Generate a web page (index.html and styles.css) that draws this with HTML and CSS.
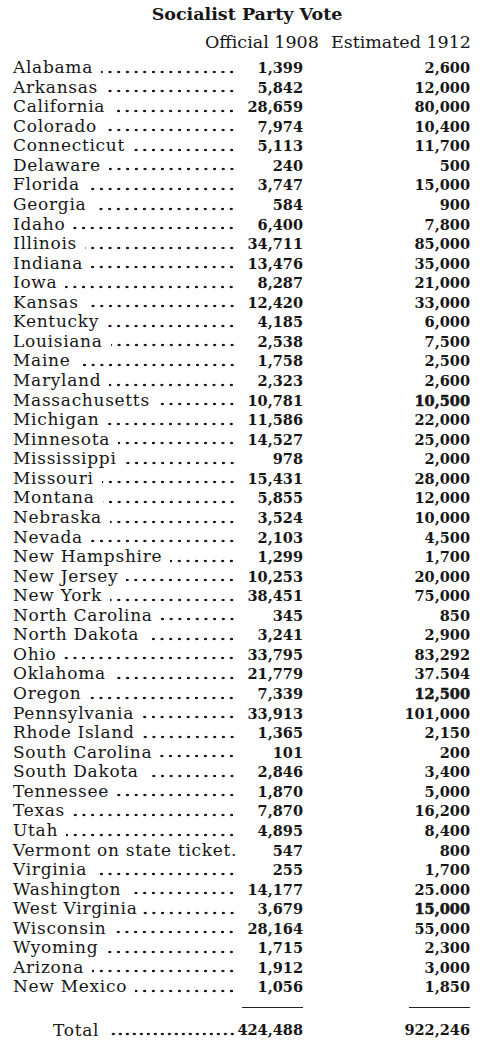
FILE: index.html
```html
<!doctype html>

<html lang="en">
<head>
    <meta charset="utf-8">
    <title>Socialist Party Vote</title>
    <link rel="stylesheet" href="styles.css">
</head>

<body>
<div class="sheet">
    <h1 class="title">Socialist Party Vote</h1>
    <div class="heads">
        <span>Official 1908</span>
        <span>Estimated 1912</span>
    </div>
    <table class="votes">
        <colgroup>
            <col class="col-state">
            <col class="col-1908">
            <col class="col-1912">
        </colgroup>
        <tbody>
            <tr><td><div class="label"><span>Alabama</span><span class="dots"></span></div></td><td class="num">1,399</td><td class="num">2,600</td></tr>
            <tr><td><div class="label"><span>Arkansas</span><span class="dots"></span></div></td><td class="num">5,842</td><td class="num">12,000</td></tr>
            <tr><td><div class="label"><span>California</span><span class="dots"></span></div></td><td class="num">28,659</td><td class="num">80,000</td></tr>
            <tr><td><div class="label"><span>Colorado</span><span class="dots"></span></div></td><td class="num">7,974</td><td class="num">10,400</td></tr>
            <tr><td><div class="label"><span>Connecticut</span><span class="dots"></span></div></td><td class="num">5,113</td><td class="num">11,700</td></tr>
            <tr><td><div class="label"><span>Delaware</span><span class="dots"></span></div></td><td class="num">240</td><td class="num">500</td></tr>
            <tr><td><div class="label"><span>Florida</span><span class="dots"></span></div></td><td class="num">3,747</td><td class="num">15,000</td></tr>
            <tr><td><div class="label"><span>Georgia</span><span class="dots"></span></div></td><td class="num">584</td><td class="num">900</td></tr>
            <tr><td><div class="label"><span>Idaho</span><span class="dots"></span></div></td><td class="num">6,400</td><td class="num">7,800</td></tr>
            <tr><td><div class="label"><span>Illinois</span><span class="dots"></span></div></td><td class="num">34,711</td><td class="num">85,000</td></tr>
            <tr><td><div class="label"><span>Indiana</span><span class="dots"></span></div></td><td class="num">13,476</td><td class="num">35,000</td></tr>
            <tr><td><div class="label"><span>Iowa</span><span class="dots"></span></div></td><td class="num">8,287</td><td class="num">21,000</td></tr>
            <tr><td><div class="label"><span>Kansas</span><span class="dots"></span></div></td><td class="num">12,420</td><td class="num">33,000</td></tr>
            <tr><td><div class="label"><span>Kentucky</span><span class="dots"></span></div></td><td class="num">4,185</td><td class="num">6,000</td></tr>
            <tr><td><div class="label"><span>Louisiana</span><span class="dots"></span></div></td><td class="num">2,538</td><td class="num">7,500</td></tr>
            <tr><td><div class="label"><span>Maine</span><span class="dots"></span></div></td><td class="num">1,758</td><td class="num">2,500</td></tr>
            <tr><td><div class="label"><span>Maryland</span><span class="dots"></span></div></td><td class="num">2,323</td><td class="num">2,600</td></tr>
            <tr><td><div class="label"><span>Massachusetts</span><span class="dots"></span></div></td><td class="num">10,781</td><td class="num heavy">10,500</td></tr>
            <tr><td><div class="label"><span>Michigan</span><span class="dots"></span></div></td><td class="num">11,586</td><td class="num">22,000</td></tr>
            <tr><td><div class="label"><span>Minnesota</span><span class="dots"></span></div></td><td class="num">14,527</td><td class="num">25,000</td></tr>
            <tr><td><div class="label"><span>Mississippi</span><span class="dots"></span></div></td><td class="num">978</td><td class="num">2,000</td></tr>
            <tr><td><div class="label"><span>Missouri</span><span class="dots"></span></div></td><td class="num">15,431</td><td class="num">28,000</td></tr>
            <tr><td><div class="label"><span>Montana</span><span class="dots"></span></div></td><td class="num">5,855</td><td class="num">12,000</td></tr>
            <tr><td><div class="label"><span>Nebraska</span><span class="dots"></span></div></td><td class="num">3,524</td><td class="num">10,000</td></tr>
            <tr><td><div class="label"><span>Nevada</span><span class="dots"></span></div></td><td class="num">2,103</td><td class="num">4,500</td></tr>
            <tr><td><div class="label"><span>New Hampshire</span><span class="dots"></span></div></td><td class="num">1,299</td><td class="num">1,700</td></tr>
            <tr><td><div class="label"><span>New Jersey</span><span class="dots"></span></div></td><td class="num">10,253</td><td class="num">20,000</td></tr>
            <tr><td><div class="label"><span>New York</span><span class="dots"></span></div></td><td class="num">38,451</td><td class="num">75,000</td></tr>
            <tr><td><div class="label"><span>North Carolina</span><span class="dots"></span></div></td><td class="num">345</td><td class="num">850</td></tr>
            <tr><td><div class="label"><span>North Dakota</span><span class="dots"></span></div></td><td class="num">3,241</td><td class="num">2,900</td></tr>
            <tr><td><div class="label"><span>Ohio</span><span class="dots"></span></div></td><td class="num">33,795</td><td class="num">83,292</td></tr>
            <tr><td><div class="label"><span>Oklahoma</span><span class="dots"></span></div></td><td class="num">21,779</td><td class="num">37.504</td></tr>
            <tr><td><div class="label"><span>Oregon</span><span class="dots"></span></div></td><td class="num">7,339</td><td class="num heavy">12,500</td></tr>
            <tr><td><div class="label"><span>Pennsylvania</span><span class="dots"></span></div></td><td class="num">33,913</td><td class="num">101,000</td></tr>
            <tr><td><div class="label"><span>Rhode Island</span><span class="dots"></span></div></td><td class="num">1,365</td><td class="num">2,150</td></tr>
            <tr><td><div class="label"><span>South Carolina</span><span class="dots"></span></div></td><td class="num">101</td><td class="num">200</td></tr>
            <tr><td><div class="label"><span>South Dakota</span><span class="dots"></span></div></td><td class="num">2,846</td><td class="num">3,400</td></tr>
            <tr><td><div class="label"><span>Tennessee</span><span class="dots"></span></div></td><td class="num">1,870</td><td class="num">5,000</td></tr>
            <tr><td><div class="label"><span>Texas</span><span class="dots"></span></div></td><td class="num">7,870</td><td class="num">16,200</td></tr>
            <tr><td><div class="label"><span>Utah</span><span class="dots"></span></div></td><td class="num">4,895</td><td class="num">8,400</td></tr>
            <tr><td><div class="label"><span>Vermont on state ticket.</span></div></td><td class="num">547</td><td class="num">800</td></tr>
            <tr><td><div class="label"><span>Virginia</span><span class="dots"></span></div></td><td class="num">255</td><td class="num">1,700</td></tr>
            <tr><td><div class="label"><span>Washington</span><span class="dots"></span></div></td><td class="num">14,177</td><td class="num">25.000</td></tr>
            <tr><td><div class="label"><span>West Virginia</span><span class="dots tight"></span></div></td><td class="num">3,679</td><td class="num heavy">15,000</td></tr>
            <tr><td><div class="label"><span>Wisconsin</span><span class="dots"></span></div></td><td class="num">28,164</td><td class="num">55,000</td></tr>
            <tr><td><div class="label"><span>Wyoming</span><span class="dots"></span></div></td><td class="num">1,715</td><td class="num">2,300</td></tr>
            <tr><td><div class="label"><span>Arizona</span><span class="dots"></span></div></td><td class="num">1,912</td><td class="num">3,000</td></tr>
            <tr><td><div class="label"><span>New Mexico</span><span class="dots"></span></div></td><td class="num">1,056</td><td class="num">1,850</td></tr>
        </tbody>
        <tfoot>
            <tr class="rules"><td></td><td><span class="rule"></span></td><td><span class="rule"></span></td></tr>
            <tr class="total"><td><div class="label"><span>Total</span><span class="dots"></span></div></td><td class="num">424,488</td><td class="num">922,246</td></tr>
        </tfoot>
    </table>
</div>
</body>
</html>
```

FILE: styles.css
```css
body {
    margin: 0;
    background: #fff;
    color: #161616;
    font-family: "DejaVu Serif", serif;
}

.sheet {
    width: 494px;
    padding-top: 4px;
}

.title {
    margin: 0;
    font-size: 17.5px;
    font-weight: bold;
    line-height: 20px;
    text-align: center;
}

.heads {
    display: flex;
    justify-content: flex-end;
    gap: 12px;
    padding: 7px 23px 0 0;
    font-size: 17.5px;
    line-height: 22px;
}

.votes {
    table-layout: fixed;
    border-collapse: collapse;
    margin: 5px 0 0 13px;
    width: 457px;
}
.col-state {
    width: 223px;
}
.col-1908 {
    width: 67px;
}
.col-1912 {
    width: 167px;
}

.votes td {
    padding: 0;
    height: 19.57px;
    line-height: 19.57px;
    white-space: nowrap;
    font-size: 17px;
    letter-spacing: 0.7px;
}

.label {
    display: flex;
}
.dots {
    flex: 1;
    margin-left: 8px;
    background: radial-gradient(circle, #1a1a1a 0 1.1px, transparent 1.6px) right 0 bottom 4px / 8.7px 4px repeat-x;
}
.dots.tight {
    margin-left: 1px;
}

.votes td.num {
    text-align: right;
    font-size: 14.5px;
    font-weight: bold;
    letter-spacing: 0;
}
.heavy {
    -webkit-text-stroke: 0.5px #161616;
}

.votes .rules td {
    height: 11px;
    line-height: 0;
    font-size: 0;
    vertical-align: bottom;
    text-align: right;
}
.rule {
    display: inline-block;
    width: 61px;
    border-top: 1.5px solid #222;
    vertical-align: bottom;
}
.votes .total td {
    height: 20px;
    line-height: 20px;
    padding-top: 12px;
}
.total .label {
    padding-left: 40px;
}
.total .dots {
    margin-left: 10px;
    background-size: 7px 4px;
}
```
